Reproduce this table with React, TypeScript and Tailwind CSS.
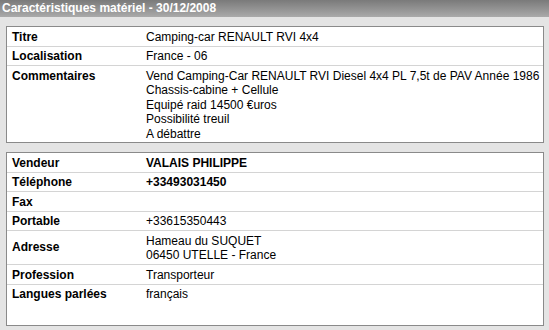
import React from 'react'

type Row = { label: string; value?: React.ReactNode; bold?: boolean; grow?: boolean }

const materiel: Row[] = [
    { label: 'Titre', value: 'Camping-car RENAULT RVI 4x4' },
    { label: 'Localisation', value: 'France - 06' },
    {
        label: 'Commentaires',
        grow: true,
        value: (
            <>
                Vend Camping-Car RENAULT RVI Diesel 4x4 PL 7,5t de PAV Année 1986<br />
                Chassis-cabine + Cellule<br />
                Equipé raid 14500 €uros<br />
                Possibilité treuil<br />
                A débattre
            </>
        ),
    },
]

const vendeur: Row[] = [
    { label: 'Vendeur', value: 'VALAIS PHILIPPE', bold: true },
    { label: 'Téléphone', value: '+33493031450', bold: true },
    { label: 'Fax' },
    { label: 'Portable', value: '+33615350443' },
    { label: 'Adresse', value: (<>Hameau du SUQUET<br />06450 UTELLE - France</>) },
    { label: 'Profession', value: 'Transporteur' },
    { label: 'Langues parlées', value: 'français', grow: true },
]

const InfoTable = ({ rows, height }: { rows: Row[]; height: string }) => (
    <div className={`ml-[6px] mr-[5px] flex flex-col bg-white border border-[#8a8a8a] ${height}`}>
        {rows.map((r, i) => (
            <div
                key={r.label}
                className={`flex text-[12px] leading-[14.5px] text-black ${i < rows.length - 1 ? 'border-b border-[#d4d4d4]' : ''} ${r.grow ? 'flex-1' : ''}`}
            >
                <div className={`w-[139px] shrink-0 pl-[5px] font-bold ${r.label === 'Adresse' ? 'self-center' : 'pt-[2.5px] pb-[1.5px]'}`}>
                    {r.label}
                </div>
                <div className={`flex-1 pt-[2.5px] pb-[1.5px] ${r.bold ? 'font-bold' : ''}`}>
                    {r.value}
                </div>
            </div>
        ))}
    </div>
)

export default function App() {
    return (
        <div className="w-[549px] h-[330px] bg-[#e4e4e4] font-['Liberation_Sans',Arial,sans-serif] overflow-hidden">
            <div className="h-[17px] bg-gradient-to-b from-[#7a7a7a] to-[#aaaaaa] pl-[2px] text-[12px] leading-[17px] font-bold text-white">
                Caractéristiques matériel - 30/12/2008
            </div>
            <div className="mt-[9px]">
                <InfoTable rows={materiel} height="h-[117px]" />
            </div>
            <div className="mt-[9px]">
                <InfoTable rows={vendeur} height="h-[174px]" />
            </div>
        </div>
    )
}
